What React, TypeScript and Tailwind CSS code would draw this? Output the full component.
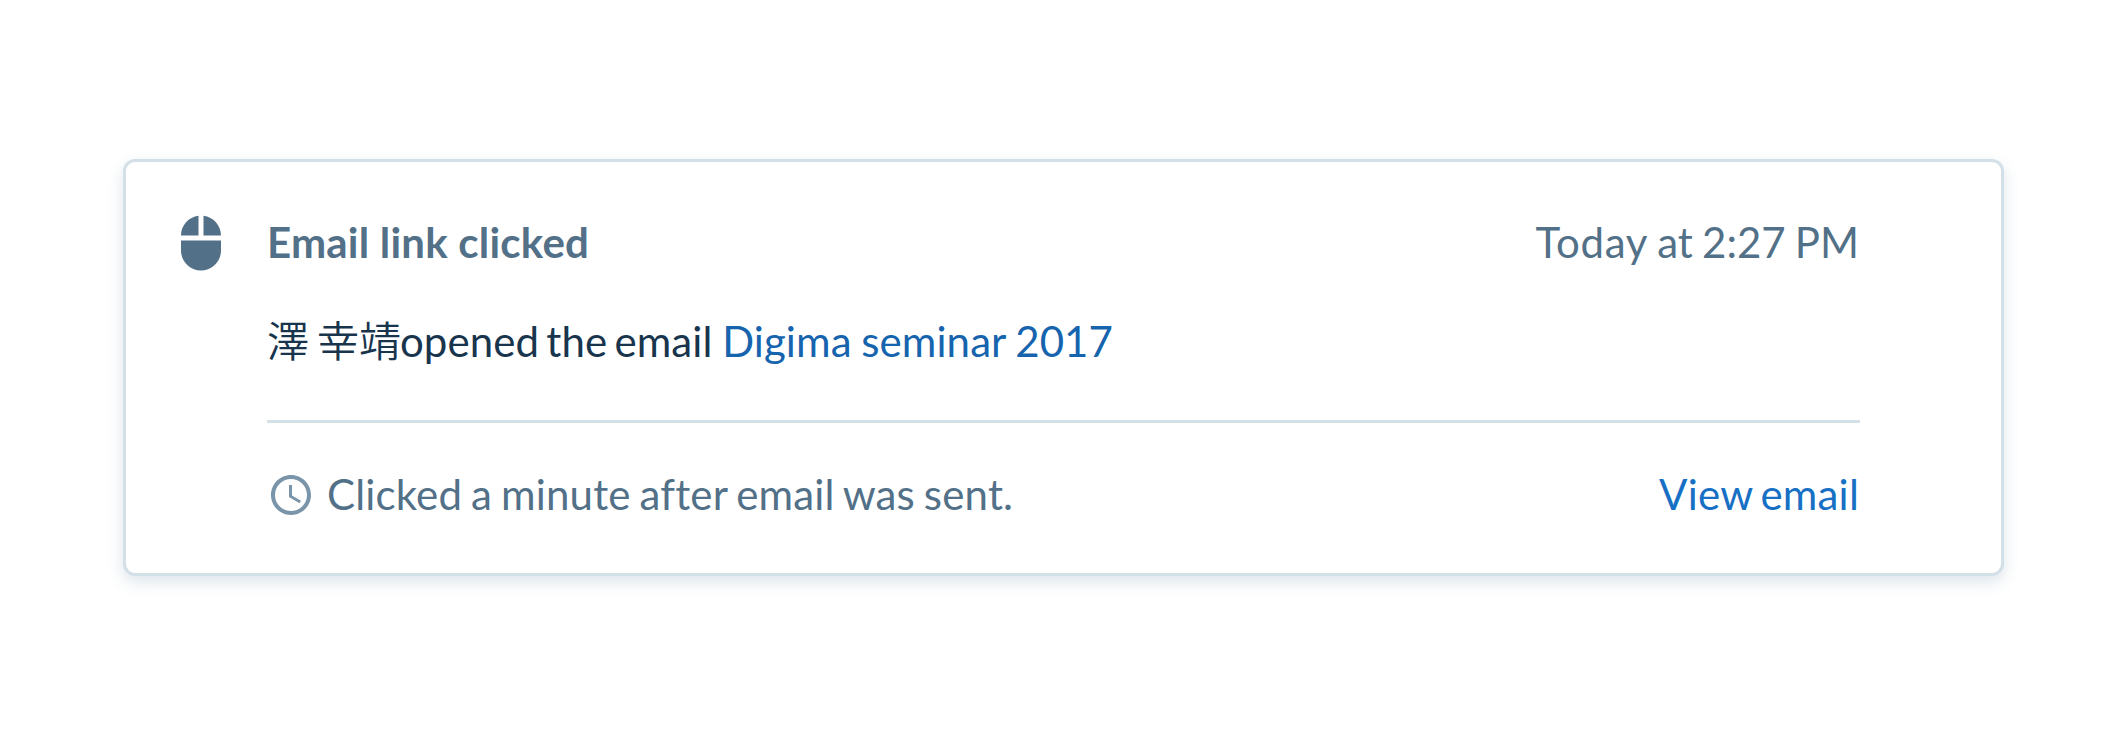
export default function App() {
  return (
    <main className="flex h-[735px] w-[2127px] items-start bg-white pt-[159px] pl-[123px] font-['Lato','Noto_Sans_CJK_JP',sans-serif] text-[42px] leading-[60px] tracking-[0.15px] text-[#527087] [font-variant-ligatures:none]">
      <article className="flex h-[417px] w-[1881px] rounded-[12px] border-[3px] border-[#d4e0e7] bg-white pt-[50px] pl-[45px] shadow-[0_6px_15px_rgba(72,118,150,0.19)]">
        <svg className="mt-px size-[60px] shrink-0" viewBox="0 0 24 24" fill="currentColor">
          <path d="M13 1.07V9h7c0-4.08-3.05-7.44-7-7.93zM4 15c0 4.42 3.58 8 8 8s8-3.58 8-8v-4H4v4zm7-13.93C7.05 1.56 4 4.92 4 9h7V1.07z" />
        </svg>
        <div className="ml-[36px] w-[1593px] shrink-0">
          <header className="flex h-[60px] justify-between pr-px">
            <h2 className="font-bold tracking-[0.22px]">Email link clicked</h2>
            <time className="tracking-normal [word-spacing:-1.6px]"><span className="tracking-[0.7px]">Today</span> at 2:27 PM</time>
          </header>
          <p className="mt-[39px] flex h-[60px] whitespace-pre text-[#18354d]">
            <span className="font-[350] tracking-normal [word-spacing:-3.5px]">澤 幸靖</span>
            <span className="-ml-px tracking-[0.1px] [word-spacing:-3.7px]">opened the email</span>
            <a className="ml-[9.6px] tracking-[0.1px] text-[#1664ae] [word-spacing:-1.3px]">Digima seminar 2017</a>
          </p>
          <footer className="mt-[49px] flex justify-between border-t-[3px] border-[#d4e0e7] pt-[41px] pr-px">
            <span className="flex h-[60px] items-center tracking-[0.17px] [word-spacing:-2px]">
              <svg className="mt-[2px] mr-[12px] size-[48px] text-[#7a94a9]" viewBox="0 0 24 24" fill="currentColor">
                <path d="M11.99 2C6.47 2 2 6.48 2 12s4.47 10 9.99 10C17.52 22 22 17.52 22 12S17.52 2 11.99 2zM12 20c-4.42 0-8-3.58-8-8s3.58-8 8-8 8 3.58 8 8-3.58 8-8 8zm.5-13H11v6l5.25 3.15.75-1.23-4.5-2.67z" />
              </svg>
              Clicked a minute after email was sent.
            </span>
            <a className="tracking-[0.2px] text-[#1770c4] [word-spacing:-3px]">View email</a>
          </footer>
        </div>
      </article>
    </main>
  );
}
